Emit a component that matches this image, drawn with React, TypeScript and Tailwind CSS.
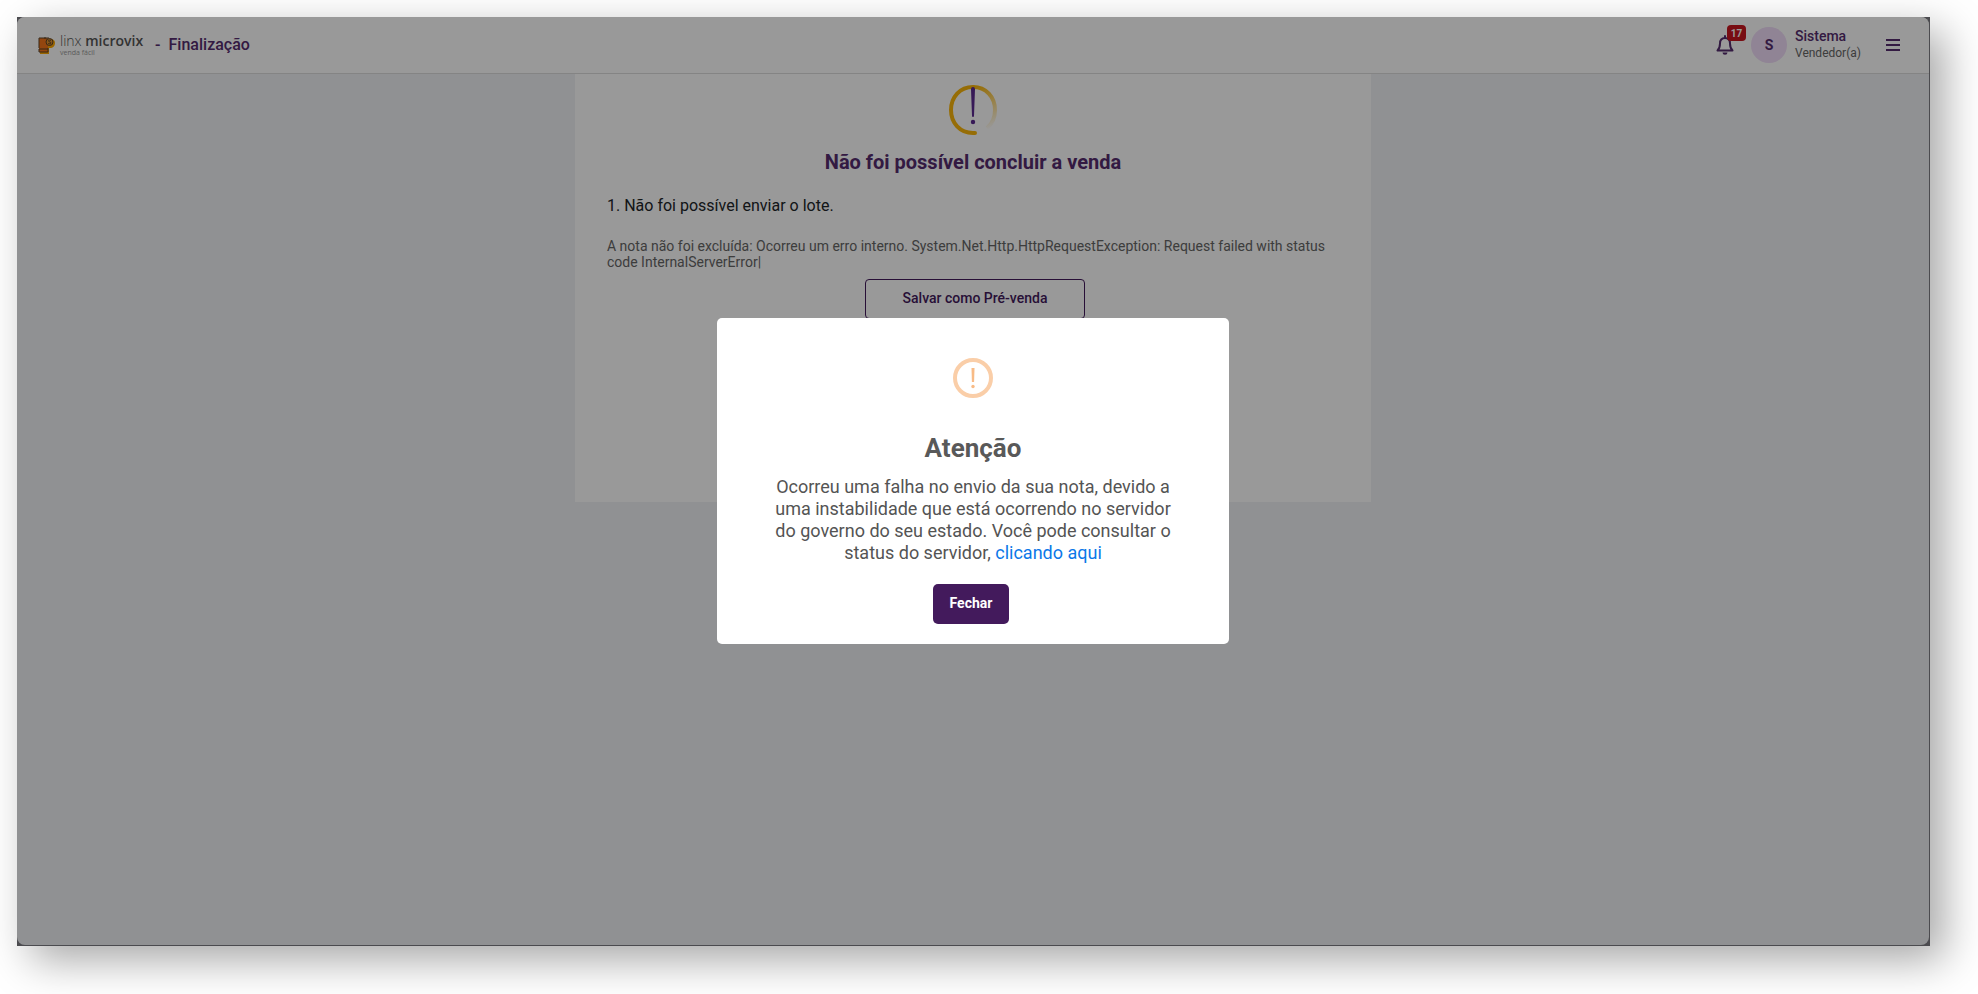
const STATUS_URL = "#status-servidor";

function BrandIcon() {
  return (
    <svg width="17" height="17" viewBox="0 0 17 17" aria-hidden="true">
      <path d="M2 2h10c3 0 5 1 5 4s-2 5-5 5h-1v6H2z" fill="#ffa800" />
      <rect x="1" y="1" width="9" height="14" rx="1" fill="#f5761a" />
      <path d="M8 1H1v10M1 12v3h9v-4M1 12h9M6 1h5" stroke="#5c4326" fill="none" />
      <circle cx="11.500" cy="5" r="3.500" fill="#e8952c" stroke="#5c4326" />
      <path
        d="M13 3.600c-1-.8-2.500-.6-2.500.3 0 1.200 2.500.9 2.500 2.100 0 1-1.700 1.200-2.700.4"
        stroke="#5c4326"
        fill="none"
      />
    </svg>
  );
}

function BellIcon() {
  return (
    <svg width="18" height="20" viewBox="0 0 18 20" fill="none" aria-hidden="true">
      <path
        d="M9 1v2M9 3C6 3 4 5 4 8.500C4 12.500 3 14 1.500 15.500h15C15 14 14 12.500 14 8.500C14 5 12 3 9 3z"
        stroke="currentColor"
        strokeWidth="2"
        strokeLinejoin="round"
        strokeLinecap="round"
      />
      <path d="M6.500 17.500h5a2.500 2.200 0 0 1-5 0z" fill="currentColor" />
    </svg>
  );
}

function MenuIcon() {
  return (
    <svg width="20" height="20" viewBox="0 0 20 20" aria-hidden="true">
      <path d="M3 4h14v2H3zM3 9h14v2H3zM3 14h14v2H3z" fill="currentColor" />
    </svg>
  );
}

function ErrorIcon() {
  return (
    <svg width="50" height="50" viewBox="0 0 50 50" aria-hidden="true">
      <defs>
        <linearGradient id="arc" x1="25" y1="2" x2="42" y2="44" gradientUnits="userSpaceOnUse">
          <stop offset="0" stopColor="#fab60a" />
          <stop offset="1" stopColor="#fab60a" stopOpacity="0" />
        </linearGradient>
      </defs>
      <path d="M25 2C38 2 47 12 47 25C47 33 44 39 39 43" stroke="url(#arc)" strokeWidth="4" fill="none" />
      <path
        d="M27 48H25C12 48 3 38 3 25S12 2 25 2"
        stroke="#fab60a"
        strokeWidth="4"
        strokeLinecap="round"
        fill="none"
      />
      <path d="M23 4a2 2 0 0 1 4 0l-1 27a1 1 0 0 1-2 0z" fill="#5c2a91" />
      <circle cx="25" cy="37" r="2.200" fill="#5c2a91" />
    </svg>
  );
}

function WarningIcon() {
  return (
    <svg width="40" height="40" viewBox="0 0 40 40" aria-hidden="true">
      <circle cx="20" cy="20" r="18" stroke="#facea8" strokeWidth="4" fill="none" />
      <path d="M18.500 10h3l-.4 14h-2.200z" fill="#f8bb86" />
      <circle cx="20" cy="28.500" r="1.700" fill="#f8bb86" />
    </svg>
  );
}

function Header() {
  return (
    <header className="flex h-[57px] items-center justify-between border-b border-[#dcdcdc] bg-white pr-[26px] pl-[21px] text-[#552c6e]">
      <div className="flex items-center">
        <BrandIcon />
        <div className="ml-[5px] flex flex-col font-['Open_Sans',sans-serif]">
          <span className="text-sm leading-4 text-[#555]">
            <span className="font-light">linx</span> <span className="font-semibold text-[#555]">microvix</span>
          </span>
          <span className="text-[7px] leading-[8px] text-[#999]">venda fácil</span>
        </div>
        <h1 className="ml-3 flex gap-2 text-base font-medium">
          <span>-</span>
          <span>Finalização</span>
        </h1>
      </div>

      <div className="flex items-center">
        <button aria-label="Notificações" className="relative">
          <BellIcon />
          <span className="absolute -top-[10px] left-[11px] flex h-4 w-[19px] items-center justify-center rounded bg-[#c8141e] text-[10px] font-bold text-white">
            17
          </span>
        </button>
        <div className="ml-[17px] flex size-9 items-center justify-center rounded-full bg-[#f0dcf8] text-sm font-bold">
          S
        </div>
        <div className="ml-2 flex flex-col pb-px">
          <span className="text-sm leading-[18px] font-medium">Sistema</span>
          <span className="text-xs leading-[17px] text-[#666]">Vendedor(a)</span>
        </div>
        <button aria-label="Menu" className="ml-[22px]">
          <MenuIcon />
        </button>
      </div>
    </header>
  );
}

function SaleError() {
  return (
    <section className="mx-auto flex h-[428px] w-full max-w-[796px] flex-col bg-white px-6 pt-[11px] pl-8">
      <div className="flex flex-col items-center pr-2">
        <ErrorIcon />
        <h2 className="mt-3 text-xl leading-[30px] font-bold text-[#552c6e]">Não foi possível concluir a venda</h2>
      </div>
      <p className="mt-[17px] text-base leading-6 text-[#212529]">1. Não foi possível enviar o lote.</p>
      <p className="mt-5 text-sm leading-4 text-[#666]">
        A nota não foi excluída: Ocorreu um erro interno. System.Net.Http.HttpRequestException: Request failed with
        status code InternalServerError|
      </p>
      <button className="mt-[9px] mr-1 h-10 w-[220px] self-center rounded border border-[#431a5c] pb-[2px] text-sm font-medium text-[#431a5c]">
        Salvar como Pré-venda
      </button>
    </section>
  );
}

function AttentionDialog() {
  return (
    <div className="absolute inset-0 flex items-center justify-center bg-black/40 pr-px pb-[2px]">
      <div
        role="dialog"
        aria-modal="true"
        aria-labelledby="dialog-title"
        className="flex w-[512px] flex-col items-center rounded-[5px] bg-white px-14 pt-10 pb-5 text-center text-[#545454]"
      >
        <WarningIcon />
        <h2 id="dialog-title" className="mt-8 text-[26px] leading-9 font-bold text-[#595959]">
          Atenção
        </h2>
        <p className="mt-[10px] text-lg leading-[22px]">
          Ocorreu uma falha no envio da sua nota, devido a uma instabilidade que está ocorrendo no servidor do governo
          do seu estado. Você pode consultar o status do servidor,{" "}
          <a href={STATUS_URL} className="text-[#0b78e8]">
            clicando aqui
          </a>
        </p>
        <button className="mt-5 mr-1 h-10 w-[76px] rounded-[5px] bg-[#431a5c] pb-[2px] text-sm font-bold text-white">
          Fechar
        </button>
      </div>
    </div>
  );
}

export default function App() {
  return (
    <div className="flex min-h-screen bg-white pt-[17px] pr-12 pb-12 pl-[17px] font-[Roboto,sans-serif]">
      {/* Janela */}
      <div className="relative flex-1 bg-[#7d7d84] pr-px pb-px shadow-[14px_14px_40px_rgba(0,0,0,0.35)]">
        <div className="flex h-full flex-col overflow-hidden rounded-lg bg-[#f0f2f5]">
          <Header />
          <main className="flex-1">
            <SaleError />
          </main>
        </div>
        <AttentionDialog />
      </div>
    </div>
  );
}
